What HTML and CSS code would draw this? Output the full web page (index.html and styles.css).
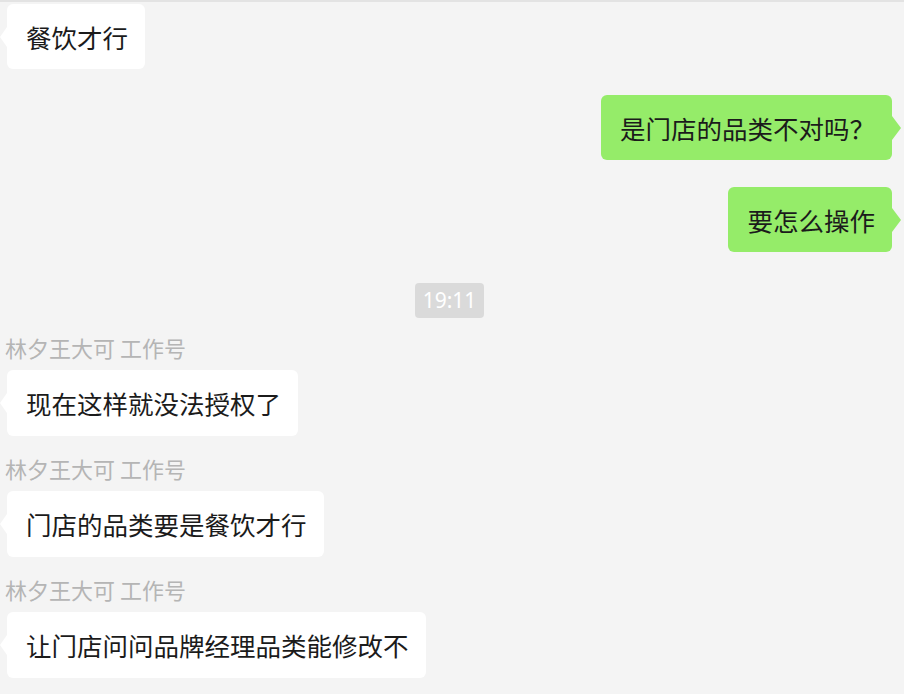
FILE: index.html
```html
<!DOCTYPE html>
<html lang="zh-CN">
<head>
    <meta charset="UTF-8">
    <meta name="viewport" content="width=device-width, initial-scale=1.0">
    <title>聊天</title>
    <link rel="stylesheet" href="styles.css">
</head>
<body>
    <div class="chat">
        <div class="msg left">
            <div class="bubble">餐饮才行</div>
        </div>
        <div class="msg right first">
            <div class="bubble">是门店的品类不对吗？</div>
        </div>
        <div class="msg right">
            <div class="bubble">要怎么操作</div>
        </div>

        <div class="time"><span>19:11</span></div>

        <div class="msg left named">
            <div class="name">林夕王大可 工作号</div>
            <div class="bubble">现在这样就没法授权了</div>
        </div>
        <div class="msg left named">
            <div class="name">林夕王大可 工作号</div>
            <div class="bubble">门店的品类要是餐饮才行</div>
        </div>
        <div class="msg left named">
            <div class="name">林夕王大可 工作号</div>
            <div class="bubble">让门店问问品牌经理品类能修改不</div>
        </div>
    </div>
</body>
</html>
```

FILE: styles.css
```css
body {
    margin: 0;
    background: #f4f4f4;
    font-family: "Noto Sans CJK SC", "Noto Sans", sans-serif;
    height: 694px;
    overflow: hidden;
}

.chat {
    display: flex;
    flex-direction: column;
    border-top: 2px solid #e3e3e3;
    padding: 2px 12px 0 7px;
}

.msg {
    display: flex;
    flex-direction: column;
}

.msg.left {
    align-items: flex-start;
}

.msg.right {
    align-items: flex-end;
    margin-top: 27px;
}

.msg.right.first {
    margin-top: 26px;
}

.msg.named {
    margin-top: 17px;
}

.name {
    font-size: 22px;
    line-height: 30px;
    color: #b5b5b5;
    margin-left: -2px;
    margin-bottom: 8px;
}

.bubble {
    position: relative;
    height: 65px;
    line-height: 65px;
    padding: 0 17px 0 19px;
    font-size: 25.5px;
    color: #1b1b1b;
    background: #ffffff;
    border-radius: 6px;
    white-space: nowrap;
}

.named .bubble {
    height: 66px;
    line-height: 66px;
}

.left .bubble::before {
    content: "";
    position: absolute;
    left: -7px;
    top: 50%;
    margin-top: -10px;
    border-top: 10px solid transparent;
    border-bottom: 10px solid transparent;
    border-right: 7px solid #ffffff;
}

.right .bubble {
    background: #95ec69;
}

.right .bubble::after {
    content: "";
    position: absolute;
    right: -9px;
    top: 50%;
    margin-top: -12px;
    border-top: 12px solid transparent;
    border-bottom: 12px solid transparent;
    border-left: 9px solid #95ec69;
}

.time {
    display: flex;
    justify-content: center;
    margin-top: 31px;
    margin-bottom: 14px;
}

.time span {
    background: #dadada;
    color: #ffffff;
    font-family: "Noto Sans", sans-serif;
    font-size: 21px;
    height: 35px;
    line-height: 35px;
    padding: 0 8px;
    border-radius: 4px;
}

.time + .msg.named {
    margin-top: 0;
}
```
